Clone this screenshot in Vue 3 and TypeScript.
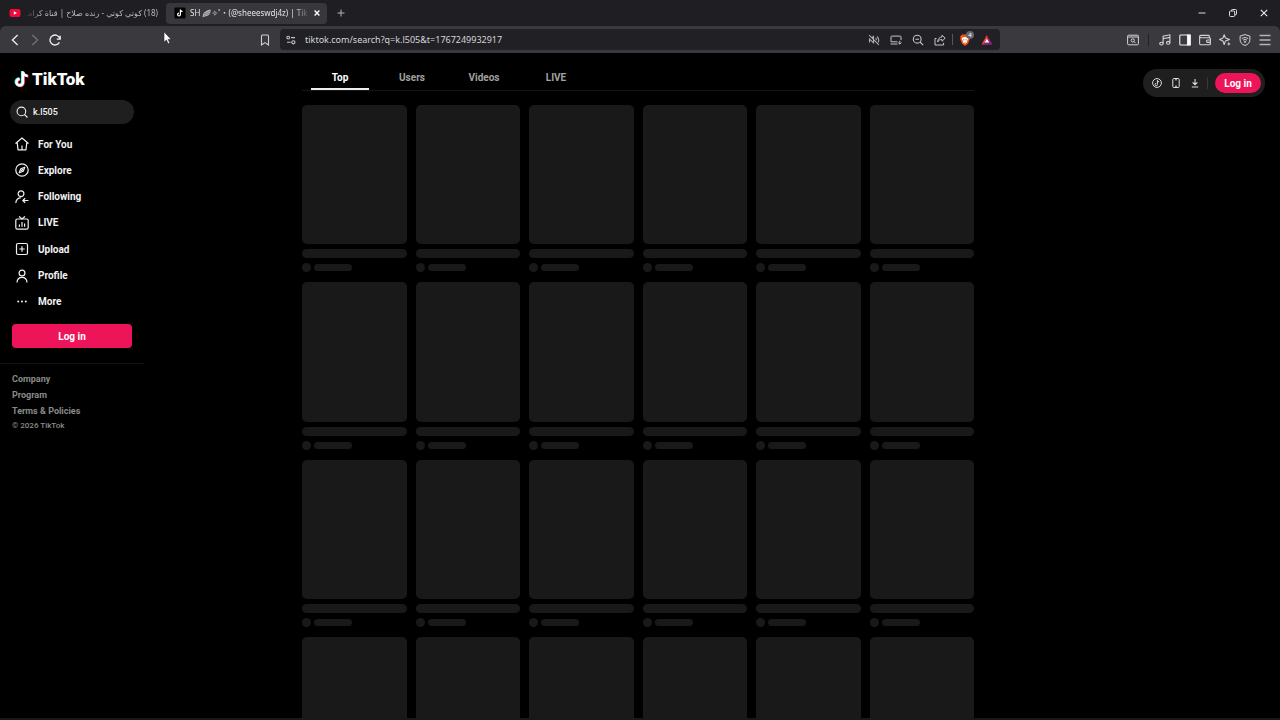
<script setup lang="ts">
import { ref } from 'vue'

interface NavItem {
  id: string
  label: string
}

const navItems: NavItem[] = [
  { id: 'home', label: 'For You' },
  { id: 'explore', label: 'Explore' },
  { id: 'following', label: 'Following' },
  { id: 'live', label: 'LIVE' },
  { id: 'upload', label: 'Upload' },
  { id: 'profile', label: 'Profile' },
  { id: 'more', label: 'More' },
]
const footerLinks: string[] = ['Company', 'Program', 'Terms & Policies']
const tabs: string[] = ['Top', 'Users', 'Videos', 'LIVE']
const activeTab = ref<string>('Top')
const query = ref<string>('k.l505')
const placeholderCount = 24
</script>

<template>
  <div class="window">
    <header class="browser">
      <div class="tab-strip">
        <div class="browser-tab">
          <svg class="favicon" viewBox="0 0 12 12" aria-hidden="true">
            <rect x="0.5" y="2" width="11" height="8" rx="2" fill="#f00a3c" />
            <path d="M4.8 4.2v3.6L8 6z" fill="#fff" />
          </svg>
          <span class="tab-title rtl" dir="rtl">(18) كوتي كوتي - رنده صلاح | قناة كرامـ</span>
        </div>
        <div class="browser-tab current">
          <svg class="favicon" viewBox="0 0 12 12" aria-hidden="true">
            <rect x="0.5" y="0.5" width="11" height="11" rx="1" fill="#000" />
            <path d="M6.4 2.6v5a1.4 1.4 0 1 1-1.4-1.4M6.4 2.6c.2 1.2 1 1.8 2.2 1.9" fill="none" stroke="#fff" stroke-width="1.2" />
          </svg>
          <span class="tab-title">SH <svg class="wing" viewBox="0 0 10 10" aria-hidden="true">
            <path d="M.8 9.4C.4 5.5 2.4 2 9.6.6 9.8 4 8.8 7 5.6 7.7 4 8 2.8 8 .8 9.4z" fill="#b5b5b9" />
            <path d="M2 7.5C4 6.4 6.5 5.5 9 4.5M2 5.6C4 4.5 6.8 3.5 9.5 2.5" fill="none" stroke="#66666b" stroke-width=".7" />
          </svg>✧˚・(@sheeeswdj4z) | Tik</span>
          <button class="icon-btn close-tab" aria-label="Close tab">
            <svg viewBox="0 0 8 8"><path d="M1.6 1.6l4.8 4.8M6.4 1.6L1.6 6.4" stroke="#fff" stroke-width="1.4" /></svg>
          </button>
        </div>
        <button class="icon-btn new-tab" aria-label="New tab">
          <svg viewBox="0 0 12 12"><path d="M6 2.500v7M2.500 6h7" stroke="#b4b4b8" /></svg>
        </button>
        <div class="window-controls">
          <button class="icon-btn" aria-label="Minimize">
            <svg viewBox="0 0 12 12"><path d="M2.5 6h7" stroke="#ddd" /></svg>
          </button>
          <button class="icon-btn" aria-label="Restore">
            <svg viewBox="0 0 12 12" fill="none" stroke="#ddd"><rect x="2.5" y="4" width="5.2" height="5.5" rx="1" /><path d="M4.5 4V3.3c0-.5.3-.8.8-.8h3.2c.6 0 1 .4 1 1v3.4c0 .6-.4.9-.9.9h-.9" /></svg>
          </button>
          <button class="icon-btn" aria-label="Close">
            <svg viewBox="0 0 12 12"><path d="M2.8 2.8l6.4 6.4M9.2 2.8L2.8 9.2" stroke="#eee" stroke-width="1.1" /></svg>
          </button>
        </div>
      </div>

      <div class="toolbar">
        <div class="history">
          <button class="icon-btn" aria-label="Back">
            <svg viewBox="0 0 12 12" fill="none" stroke="#eee" stroke-width="1.3"><path d="M8.6 1L3.4 6l5.2 5" /></svg>
          </button>
          <button class="icon-btn" aria-label="Forward">
            <svg viewBox="0 0 12 12" fill="none" stroke="#77767c" stroke-width="1.2"><path d="M3.4 1l5.2 5-5.2 5" /></svg>
          </button>
          <button class="icon-btn" aria-label="Reload">
            <svg viewBox="0 0 12 12" fill="none" stroke="#eee" stroke-width="1.3"><path d="M10.9 5A5 5 0 1 0 10.4 8.4M11.2 1.8V5.2H7.8" /></svg>
          </button>
          <button class="icon-btn bookmark" aria-label="Bookmark">
            <svg viewBox="0 0 12 12" fill="none" stroke="#d0d0d3" stroke-width="1.1"><path d="M2.5 2c0-.6.3-1 .9-1h5.2c.6 0 .9.4.9 1v9L6 8.6 2.5 11z" /></svg>
          </button>
        </div>
        <div class="address">
          <svg class="site-icon" viewBox="0 0 12 12" fill="none" stroke="#c4c4c8" stroke-width="1.1" aria-hidden="true">
            <circle cx="3.2" cy="3.6" r="1.4" /><path d="M6 3.6h4M2 8.3h3.6" /><circle cx="8.4" cy="8.3" r="1.6" />
          </svg>
          <input class="url" aria-label="Address" value="tiktok.com/search?q=k.l505&amp;t=1767249932917" />
          <div class="address-icons">
            <button class="icon-btn" aria-label="Autoplay blocked">
              <svg viewBox="0 0 12 12" fill="none" stroke="#aeaeb2" stroke-width="1.100"><path d="M1.500 8.500V5L5.500 8.800V2.500L3.800 4M1.200 1.200l9.600 9.600M7.600 4.200c.6.600.8 1.300.8 2M9 2.500c1.800 1.800 2 4.200 1.200 6" /></svg>
            </button>
            <button class="icon-btn" aria-label="Install">
              <svg viewBox="0 0 12 12" fill="none" stroke="#c4c4c8" stroke-width="1"><path d="M11 6V3c0-.6-.3-.9-.9-.9H1.900c-.6 0-.9.300-.9.900v4.800h6.500M.5 10h7M9.800 6.800v3.200M8.200 8.600l1.600 1.500 1.600-1.500" /></svg>
            </button>
            <button class="icon-btn" aria-label="Zoom">
              <svg viewBox="0 0 12 12" fill="none" stroke="#c4c4c8" stroke-width="1.1"><circle cx="5.2" cy="5.2" r="3.9" /><path d="M8 8l3.2 3.2M3.4 5.2h3.6" /></svg>
            </button>
            <button class="icon-btn" aria-label="Share">
              <svg viewBox="0 0 12 12" fill="none" stroke="#c4c4c8" stroke-width="1"><path d="M2.500 4.500H1v6.500h8.600V8.800M8 1.200l3.200 3L8 7.200V5.600C6 5.400 4.600 6.200 3.600 8c.2-3 1.800-4.800 4.400-5.100z" /></svg>
            </button>
            <span class="bar-line"></span>
            <button class="icon-btn shields" aria-label="Shields, 4 blocked">
              <svg viewBox="0 0 12 12"><path d="M3 .5h6l2 2.200-.5 1 .3 1.300-1.600 4.500L6 12 2.800 9.500 1.200 5l.3-1.300-.5-1z" fill="#f4511e" /><path d="M3.500 3.500L6 3l2.500.5 1 1.500L8 7l.2 1.200L6 9.800 3.800 8.200 4 7 2.500 5z" fill="#fff" /><path d="M4 5l1.500.6L5 7zM8 5l-1.500.6L7 7zM5 8h2l-1 .8z" fill="#f4511e" /></svg>
              <span class="badge">4</span>
            </button>
            <button class="icon-btn" aria-label="Rewards">
              <svg viewBox="0 0 12 12"><path d="M6 1L.6 10.500H6z" fill="#ff4724" /><path d="M6 1l5.400 9.500H6z" fill="#9e1f63" /><path d="M.6 10.500L6 7.500l5.400 3z" fill="#662d91" /><path d="M6 4.800L3.800 8.600h4.400z" fill="#fff" /></svg>
            </button>
          </div>
        </div>
        <div class="actions">
          <button class="icon-btn" aria-label="Search tabs">
            <svg viewBox="0 0 12 12" fill="none" stroke="#d4d4d7" stroke-width="1"><rect x=".6" y="1.200" width="10.800" height="9.600" rx="1" /><path d="M.6 3h10.800M7 7.600l1.500 1.500" /><circle cx="5.800" cy="6.400" r="1.600" /></svg>
          </button>
          <span class="bar-line dark"></span>
          <button class="icon-btn" aria-label="Media">
            <svg viewBox="0 0 12 12" fill="none" stroke="#d4d4d7" stroke-width="1.1"><ellipse cx="2.400" cy="9.600" rx="1.700" ry="1.400" /><ellipse cx="9.200" cy="8.800" rx="1.700" ry="1.400" /><path d="M4.100 9.600V2.200L10.900.8v8M4.100 4.800l6.800-1.400" /></svg>
          </button>
          <button class="icon-btn" aria-label="Sidebar">
            <svg viewBox="0 0 12 12" fill="none" stroke="#eee" stroke-width="1.1"><rect x=".8" y="1" width="10.400" height="10" rx=".8" /><path d="M8.500 1h2.700v10H8.500z" fill="#fff" /></svg>
          </button>
          <button class="icon-btn" aria-label="Wallet">
            <svg viewBox="0 0 12 12" fill="none" stroke="#d4d4d7" stroke-width="1.1"><path d="M10.300 3.800V2.200c0-.5-.3-.8-.8-.8H1.800c-.7 0-1.200.5-1.200 1.200s.5 1.200 1.200 1.200h8.600c.6 0 1 .3 1 .9v5c0 .6-.4 1-1 1H1.800c-.7 0-1.200-.5-1.200-1.200V2.600M11.400 6H8.600c-.7 0-1.100.5-1.100 1.200s.4 1.200 1.100 1.200h2.800" /></svg>
          </button>
          <button class="icon-btn" aria-label="Leo">
            <svg viewBox="0 0 12 12" fill="none" stroke="#d4d4d7" stroke-width="1.1" stroke-linejoin="round"><path d="M5.200.7l1.300 3.400L10.500 5.400 6.500 6.900 5.200 10.500 3.900 6.900.6 5.400l3.300-1.300z" /><path d="M9.800 7.600l.6 1.800 1.600.6-1.600.6L9.800 12l-.6-1.400L7.600 10l1.600-.6z" fill="#d4d4d7" stroke="none" /></svg>
          </button>
          <button class="icon-btn" aria-label="VPN">
            <svg viewBox="0 0 12 12" fill="none" stroke="#d4d4d7" stroke-width="1"><path d="M6 .6l4.900 1.500v3.700c0 2.700-1.800 4.600-4.900 5.700C2.900 10.400 1.100 8.500 1.100 5.800V2.100z" /><path d="M2.800 4.700c2-1.500 4.400-1.500 6.400 0M4.100 6.200c1.200-.9 2.600-.9 3.800 0" /><circle cx="6" cy="7.800" r=".6" fill="#d4d4d7" /></svg>
          </button>
          <button class="icon-btn" aria-label="Menu">
            <svg viewBox="0 0 12 12" stroke="#b4b4b8" stroke-width="1.300"><path d="M.5 1.500h11M.5 6h11M.5 10.500h11" /></svg>
          </button>
        </div>
      </div>
    </header>

    <div class="page">
      <aside class="sidebar">
        <a class="logo" href="#" aria-label="TikTok home">
          <svg viewBox="0 0 15 18" aria-hidden="true">
            <g fill="none" stroke-width="2.600">
              <path d="M8.200 1v10.700a3.200 3.200 0 1 1-3.200-3.200M8.200 1c.2 2.700 2 4.200 4.800 4.400" stroke="#25f4ee" />
              <path d="M9.600 2v10.700a3.200 3.200 0 1 1-3.200-3.200M9.600 2c.2 2.700 2 4.200 4.800 4.400" stroke="#fe2c55" />
              <path d="M8.900 1.500v10.700A3.200 3.200 0 1 1 5.700 9M8.900 1.500c.2 2.700 2 4.200 4.800 4.400" stroke="#fff" />
            </g>
          </svg>
          <span>TikTok</span>
        </a>
        <label class="search">
          <svg viewBox="0 0 12 12" fill="none" stroke="#eee" stroke-width="1.100" aria-hidden="true"><circle cx="5.400" cy="5.400" r="4.300" /><path d="M8.500 8.500l3 3" /></svg>
          <input v-model="query" type="text" aria-label="Search" />
        </label>
        <nav class="nav">
          <a v-for="item in navItems" :key="item.id" href="#" class="nav-link">
            <svg viewBox="0 0 14 14" fill="none" stroke="#f2f2f2" stroke-width="1.200" stroke-linejoin="round" aria-hidden="true">
              <path v-if="item.id === 'home'" d="M7 1L.8 6.200h1.500L3 12.800h8l.7-6.600h1.500zM7 8.500v4.300" />
              <template v-else-if="item.id === 'explore'">
                <circle cx="7" cy="7" r="6.200" /><path d="M9.800 4.200L8.200 8.200 4.200 9.800l1.600-4z" /><path d="M6 8l2-2" />
              </template>
              <template v-else-if="item.id === 'following'">
                <circle cx="6" cy="3.800" r="2.900" /><path d="M.8 13c.3-3.400 2.200-5.200 5-5.200M13.500 10.500H7.800M10.200 8.200l-2.400 2.300 2.400 2.300" />
              </template>
              <template v-else-if="item.id === 'live'">
                <rect x=".8" y="3" width="12.400" height="10.200" rx="1.600" /><path d="M4 .4L7 3l3-2.600M4.400 8.400v2.400M7 6v4.800M9.600 7.400v3.400" />
              </template>
              <template v-else-if="item.id === 'upload'">
                <rect x="1.500" y="1.500" width="11" height="11" rx="1.500" /><path d="M7 4.300v5.400M4.300 7h5.400" />
              </template>
              <template v-else-if="item.id === 'profile'">
                <circle cx="7" cy="4" r="2.900" /><path d="M2 13.500c.2-3.400 2-5.100 5-5.100s4.800 1.700 5 5.100" />
              </template>
              <g v-else fill="#f2f2f2" stroke="none"><circle cx="3.200" cy="6.500" r="1" /><circle cx="7" cy="6.500" r="1" /><circle cx="10.800" cy="6.500" r="1" /></g>
            </svg>
            <span>{{ item.label }}</span>
          </a>
        </nav>
        <button class="login wide">Log in</button>
        <footer class="footer">
          <a v-for="link in footerLinks" :key="link" href="#">{{ link }}</a>
          <small>© 2026 TikTok</small>
        </footer>
      </aside>

      <main class="results">
        <div class="tabs" role="tablist">
          <button
            v-for="tab in tabs"
            :key="tab"
            role="tab"
            class="tab"
            :class="{ active: tab === activeTab }"
            :aria-selected="tab === activeTab"
            @click="activeTab = tab"
          >{{ tab }}</button>
        </div>
        <div class="grid" aria-busy="true">
          <div v-for="n in placeholderCount" :key="n" class="card">
            <div class="thumb"></div>
            <div class="line"></div>
            <div class="author"><span class="avatar"></span><span class="name"></span></div>
          </div>
        </div>
      </main>

      <div class="account">
        <div class="pill">
          <button class="icon-btn" aria-label="Coins">
            <svg viewBox="0 0 12 12" fill="none" stroke="#ddd" stroke-width="1"><circle cx="6" cy="6" r="4.400" /><path d="M6.400 3.200v4.300a1.200 1.200 0 1 1-1.200-1.200M6.400 3.400c.2.900.8 1.400 1.800 1.500" /></svg>
          </button>
          <button class="icon-btn" aria-label="Get app">
            <svg viewBox="0 0 12 12" fill="none" stroke="#ddd" stroke-width="1"><rect x="2.800" y="1.500" width="6.400" height="9" rx="1" /><path d="M5 2.800h2M5 9.200h2" /></svg>
          </button>
          <button class="icon-btn" aria-label="Download">
            <svg viewBox="0 0 12 12" fill="none" stroke="#ddd" stroke-width="1.100"><path d="M6 2v5.500M3.600 5.300L6 7.700l2.400-2.400M2.800 10h6.400" /></svg>
          </button>
          <span class="pill-line"></span>
          <button class="login round">Log in</button>
        </div>
      </div>
    </div>

    <svg class="cursor" viewBox="0 0 9 14" aria-hidden="true">
      <path d="M1 .8v10.400l2.400-2.200 1.700 3.800 1.700-.8-1.600-3.600h3z" fill="#fff" stroke="#222" stroke-width=".6" />
    </svg>
  </div>
</template>

<style>
body {
  margin: 0;
  background: #000;
}
</style>

<style scoped>
.window {
  position: relative;
  display: flex;
  flex-direction: column;
  height: 100vh;
  overflow: hidden;
  box-sizing: border-box;
  border-bottom: 2px solid #1b1618;
  background: #000;
  color: #f2f2f2;
  font-family: Roboto, "Liberation Sans", sans-serif;
  font-size: 10px;
}
a {
  color: inherit;
  text-decoration: none;
}
button,
input {
  margin: 0;
  padding: 0;
  border: 0;
  background: none;
  color: inherit;
  font: inherit;
}
input {
  min-width: 0;
  outline: 0;
}
svg {
  display: block;
  flex: none;
}
.icon-btn {
  display: grid;
  place-items: center;
  flex: none;
}
.icon-btn svg {
  width: 12px;
  height: 12px;
}

.browser {
  flex: none;
  background: #1f1e23;
  font-family: "Noto Sans", "DejaVu Sans", "Noto Sans CJK JP", sans-serif;
}
.tab-strip {
  display: flex;
  align-items: center;
  height: 26px;
}
.browser-tab {
  display: flex;
  align-items: center;
  box-sizing: border-box;
  width: 161px;
  height: 21px;
  margin-left: 5px;
  padding: 0 3px 0 4px;
  border-radius: 4px;
  color: #b9b9bd;
}
.browser-tab.current {
  margin-left: 0;
  padding: 0 6px 0 8px;
  background: #38373c;
  color: #e4e4e7;
}
.favicon {
  width: 12px;
  height: 12px;
}
.tab-title {
  flex: 1;
  min-width: 0;
  margin-left: 5px;
  overflow: hidden;
  white-space: nowrap;
  font-size: 8px;
  line-height: 18px;
  mask-image: linear-gradient(to left, transparent, #000 16px);
}
.browser-tab.current .tab-title {
  margin-left: 4px;
  margin-right: 3px;
}
.tab-title.rtl {
  margin-right: 5px;
  mask-image: linear-gradient(to right, transparent, #000 16px);
}
.wing {
  display: inline-block;
  width: 9px;
  height: 9px;
  vertical-align: middle;
}
.close-tab svg {
  width: 8px;
  height: 8px;
}
.new-tab {
  margin-left: 8px;
}
.window-controls {
  display: flex;
  gap: 19px;
  margin-left: auto;
  padding-right: 10px;
}
.toolbar {
  display: grid;
  grid-template-columns: minmax(0, 1fr) minmax(0, 720px) minmax(0, 1fr);
  align-items: center;
  height: 27px;
  padding: 0 9px;
  border-radius: 6px 6px 0 0;
  background: #3a393e;
}
.history {
  display: flex;
  gap: 8px;
}
.bookmark {
  margin-left: auto;
  margin-right: 9px;
}
.address {
  display: flex;
  align-items: center;
  box-sizing: border-box;
  height: 21px;
  padding: 0 7px 0 5px;
  border-radius: 4px;
  background: #212025;
}
.site-icon {
  width: 12px;
  height: 12px;
}
.url {
  flex: 1;
  margin-left: 8px;
  color: #d6d6d9;
  font-size: 9px;
}
.address-icons {
  display: flex;
  align-items: center;
  gap: 10px;
}
.bar-line {
  width: 1px;
  height: 11px;
  margin: 0 -4px;
  background: #58575d;
}
.bar-line.dark {
  height: 12px;
  margin: 0 2px 0 1px;
  background: #222126;
}
.shields {
  position: relative;
}
.badge {
  position: absolute;
  top: -3px;
  right: -3px;
  width: 8px;
  height: 8px;
  border-radius: 4px;
  background: #66656f;
  color: #fff;
  font-size: 6px;
  line-height: 8px;
}
.actions {
  display: flex;
  align-items: center;
  justify-content: flex-end;
  gap: 8px;
}

.page {
  display: grid;
  grid-template-columns: 144px minmax(0, 1fr) 148px;
  flex: 1;
  min-height: 0;
}
.sidebar {
  display: flex;
  flex-direction: column;
  padding-top: 16px;
}
.logo {
  display: flex;
  align-items: center;
  gap: 3px;
  height: 20px;
  margin-left: 14px;
  color: #fff;
  font-size: 17px;
  font-weight: 900;
}
.logo svg {
  width: 15px;
  height: 18px;
}
.search {
  display: flex;
  align-items: center;
  height: 24px;
  margin: 11px 10px 7px;
  padding-left: 6px;
  border-radius: 12px;
  background: #1f1f1f;
}
.search svg {
  width: 12px;
  height: 12px;
}
.search input {
  flex: 1;
  margin-left: 5px;
  font-size: 9px;
  font-weight: 500;
}
.nav {
  display: grid;
  grid-auto-rows: 1fr;
  min-height: 184px;
}
.nav-link {
  display: flex;
  align-items: center;
  gap: 9px;
  padding-left: 15px;
  font-weight: 700;
}
.nav-link svg {
  width: 14px;
  height: 14px;
}
.login {
  background: #ee1459;
  color: #fff;
  font-weight: 700;
}
.wide {
  height: 24px;
  margin: 9px 12px 15px;
  border-radius: 4px;
}
.footer {
  display: flex;
  flex-direction: column;
  padding: 7px 12px;
  border-top: 1px solid #141414;
  color: #8a8a8a;
  font-size: 9px;
  font-weight: 700;
  line-height: 16px;
}
.footer small {
  font-size: 8px;
  font-weight: 500;
  line-height: 14px;
}

.results {
  width: 100%;
  max-width: 672px;
  margin: 0 auto;
}
.tabs {
  display: flex;
  height: 37px;
  padding: 0 2px;
  border-bottom: 1px solid #161616;
}
.tab {
  position: relative;
  width: 72px;
  padding-top: 11px;
  color: #a2a2a2;
  font-weight: 700;
}
.tab.active {
  color: #fff;
}
.tab.active::after {
  content: "";
  position: absolute;
  right: 7px;
  bottom: 0;
  left: 7px;
  height: 2px;
  background: #eee;
}
.grid {
  display: grid;
  grid-template-columns: repeat(6, minmax(0, 1fr));
  gap: 10px 9px;
  margin-top: 14px;
}
.card {
  display: flex;
  flex-direction: column;
  gap: 5px;
}
.thumb {
  aspect-ratio: 3 / 4;
  border-radius: 5px;
  background: #191919;
}
.line {
  height: 9px;
  border-radius: 5px;
  background: #191919;
}
.author {
  display: flex;
  align-items: center;
  gap: 3px;
}
.avatar {
  width: 9px;
  height: 9px;
  border-radius: 50%;
  background: #191919;
}
.name {
  width: 38px;
  height: 7px;
  border-radius: 4px;
  background: #191919;
}

.account {
  padding: 16px 15px 0 0;
}
.pill {
  display: flex;
  align-items: center;
  justify-content: space-between;
  height: 20px;
  margin-left: 11px;
  padding: 4px 4px 4px 8px;
  border-radius: 14px;
  background: #1f1f1f;
}
.pill-line {
  width: 1px;
  height: 12px;
  background: #38383a;
}
.round {
  width: 46px;
  height: 20px;
  border-radius: 10px;
}
.cursor {
  position: absolute;
  top: 31px;
  left: 163px;
  width: 9px;
  height: 14px;
}
</style>
